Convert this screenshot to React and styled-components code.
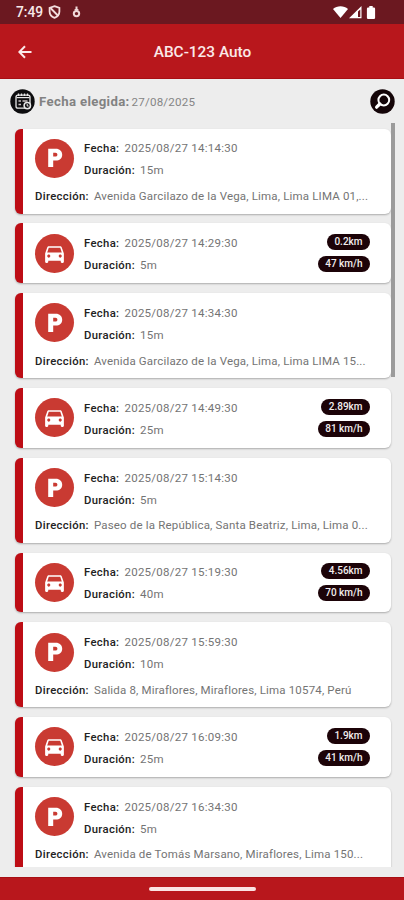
import React from 'react';
import styled, { createGlobalStyle } from 'styled-components';

const TRIPS = [
  {
    type: 'parking',
    date: '2025/08/27 14:14:30',
    duration: '15m',
    address: 'Avenida Garcilazo de la Vega, Lima, Lima LIMA 01,...',
  },
  {
    type: 'drive',
    date: '2025/08/27 14:29:30',
    duration: '5m',
    distance: '0.2km',
    speed: '47 km/h',
  },
  {
    type: 'parking',
    date: '2025/08/27 14:34:30',
    duration: '15m',
    address: 'Avenida Garcilazo de la Vega, Lima, Lima LIMA 15...',
  },
  {
    type: 'drive',
    date: '2025/08/27 14:49:30',
    duration: '25m',
    distance: '2.89km',
    speed: '81 km/h',
  },
  {
    type: 'parking',
    date: '2025/08/27 15:14:30',
    duration: '5m',
    address: 'Paseo de la República, Santa Beatriz, Lima, Lima 0...',
  },
  {
    type: 'drive',
    date: '2025/08/27 15:19:30',
    duration: '40m',
    distance: '4.56km',
    speed: '70 km/h',
  },
  {
    type: 'parking',
    date: '2025/08/27 15:59:30',
    duration: '10m',
    address: 'Salida 8, Miraflores, Miraflores, Lima 10574, Perú',
  },
  {
    type: 'drive',
    date: '2025/08/27 16:09:30',
    duration: '25m',
    distance: '1.9km',
    speed: '41 km/h',
  },
  {
    type: 'parking',
    date: '2025/08/27 16:34:30',
    duration: '5m',
    address: 'Avenida de Tomás Marsano, Miraflores, Lima 150...',
  },
];

const ShieldIcon = () => (
  <svg width="13" height="14" viewBox="0 0 13 14" fill="none">
    <path
      d="M6.5 1.2 L11.4 2.8 V6.5 C11.4 9.6 9.5 11.8 6.5 12.8 C3.5 11.8 1.6 9.6 1.6 6.5 V2.8 Z"
      stroke="#f3dede"
      strokeWidth="1.8"
    />
    <path d="M2.5 3 L10.3 11" stroke="#f3dede" strokeWidth="1.8" />
  </svg>
);

const DebugIcon = () => (
  <svg width="9" height="12" viewBox="0 0 9 12" fill="none">
    <path d="M4.5 0.5 V5" stroke="#f0d8d8" strokeWidth="2" />
    <circle cx="4.5" cy="7.6" r="2.7" stroke="#f0d8d8" strokeWidth="2" />
    <path d="M2.6 3.6 H6.4" stroke="#f0d8d8" strokeWidth="1.2" />
  </svg>
);

const StatusIcons = () => (
  <svg width="43" height="15" viewBox="0 0 43 15" fill="#fff">
    <path d="M0 4 C4 0.3 11 0.3 15 4 L7.5 13 Z" />
    <path fillRule="evenodd" d="M16 13.2 L28.5 1 V13.2 Z M25 6.5 V12 H27.3 V4.5 Z" />
    <path d="M36.3 1 h3.4 v1.6 h1.2 a1.2 1.2 0 0 1 1.2 1.2 v9 a1.2 1.2 0 0 1 -1.2 1.2 h-5.8 a1.2 1.2 0 0 1 -1.2 -1.2 v-9 a1.2 1.2 0 0 1 1.2 -1.2 h1.2 z" />
  </svg>
);

const BackIcon = () => (
  <svg width="14" height="14" viewBox="0 0 14 14" fill="none">
    <path d="M13.5 7 H1.8 M7 1.3 L1.3 7 L7 12.7" stroke="#fbe9e9" strokeWidth="2" />
  </svg>
);

const CalendarIcon = () => (
  <svg width="25" height="25" viewBox="0 0 25 25" fill="none">
    <circle cx="12.5" cy="12.5" r="12.2" fill="#0d0d0f" />
    <rect x="6" y="6.2" width="14" height="13" rx="2" stroke="#e8e8e8" strokeWidth="1.3" />
    <path d="M6.5 8.6 H19.5" stroke="#e8e8e8" strokeWidth="1.2" />
    <path d="M8.5 4.5 V7 M11.5 4.5 V7 M14.5 4.5 V7 M17.5 4.5 V7" stroke="#e8e8e8" strokeWidth="1.3" />
    <path d="M8.5 12 H11 M12.5 12 H17.5 M8.5 15.5 H11" stroke="#c9c2c4" strokeWidth="1.6" />
    <circle cx="17.3" cy="16.6" r="3.2" fill="#0d0d0f" stroke="#e8e8e8" strokeWidth="1.5" />
    <path d="M17.2 15 V17 H18.6" stroke="#e8e8e8" strokeWidth="1" />
  </svg>
);

const SearchIcon = () => (
  <svg width="25" height="25" viewBox="0 0 25 25" fill="none">
    <circle cx="12.5" cy="12.5" r="12.2" fill="#140508" />
    <circle cx="13.8" cy="11" r="5.4" stroke="#fff" strokeWidth="2" />
    <path d="M9.8 15 L6.6 18.2" stroke="#fff" strokeWidth="3.2" strokeLinecap="round" />
  </svg>
);

const ParkingIcon = () => (
  <svg width="24" height="24" viewBox="0 0 24 24" fill="#fff">
    <path
      fillRule="evenodd"
      d="M5.2 2.8 H12.8 C16.6 2.8 19.2 5.2 19.2 8.7 C19.2 12.2 16.6 14.6 12.8 14.6 H10.2 V21 H5.2 Z M10.2 6.8 V10.6 H12.4 C13.7 10.6 14.4 9.8 14.4 8.7 C14.4 7.6 13.7 6.8 12.4 6.8 Z"
    />
  </svg>
);

const CarIcon = () => (
  <svg width="25" height="25" viewBox="0 0 24 24" fill="#fff">
    <path d="M18.92 6.01C18.72 5.42 18.16 5 17.5 5h-11c-.66 0-1.21.42-1.42 1.01L3 12v8c0 .55.45 1 1 1h1c.55 0 1-.45 1-1v-1h12v1c0 .55.45 1 1 1h1c.55 0 1-.45 1-1v-8l-2.08-5.99zM6.5 16c-.83 0-1.5-.67-1.5-1.5S5.67 13 6.5 13s1.5.67 1.5 1.5S7.33 16 6.5 16zm11 0c-.83 0-1.5-.67-1.5-1.5s.67-1.5 1.5-1.5 1.5.67 1.5 1.5-.67 1.5-1.5 1.5zM5 11l1.5-4.5h11L19 11H5z" />
  </svg>
);

const TripCard = ({ trip }) => (
  <Card>
    <Summary>
      <Badge>{trip.type === 'parking' ? <ParkingIcon /> : <CarIcon />}</Badge>
      <Details>
        <Field>
          <Label>Fecha:</Label>
          <Value>{trip.date}</Value>
        </Field>
        <Field>
          <Label>Duración:</Label>
          <Value>{trip.duration}</Value>
        </Field>
      </Details>
      {trip.type === 'drive' && (
        <Stats>
          <Pill>{trip.distance}</Pill>
          <Pill>{trip.speed}</Pill>
        </Stats>
      )}
    </Summary>
    {trip.address && (
      <Address>
        <Label>Dirección:</Label>
        <Value $tight>{trip.address}</Value>
      </Address>
    )}
  </Card>
);

const App = () => {
  return (
    <Screen>
      <GlobalStyle />
      <StatusBar>
        <Clock>7:49</Clock>
        <ShieldIcon />
        <DebugIcon />
        <StatusRight>
          <StatusIcons />
        </StatusRight>
      </StatusBar>
      <AppBar>
        <BackIcon />
        <Title>ABC-123 Auto</Title>
      </AppBar>
      <FilterRow>
        <CalendarIcon />
        <FilterLabel>Fecha elegida:</FilterLabel>
        <FilterDate>27/08/2025</FilterDate>
        <SearchIcon />
      </FilterRow>
      <List>
        {TRIPS.map((trip) => (
          <TripCard key={trip.date} trip={trip} />
        ))}
        <ScrollThumb />
      </List>
      <NavBar>
        <Handle />
      </NavBar>
    </Screen>
  );
};

export default App;

const GlobalStyle = createGlobalStyle`
  * {
    box-sizing: border-box;
  }
  body {
    margin: 0;
    background: #ededed;
    font-family: Roboto, sans-serif;
  }
  svg {
    display: block;
    flex-shrink: 0;
  }
`;

const Screen = styled.div`
  width: 404px;
  height: 900px;
  display: flex;
  flex-direction: column;
  background: #ededed;
  overflow: hidden;
`;

const StatusBar = styled.div`
  height: 24px;
  flex-shrink: 0;
  display: flex;
  align-items: center;
  padding: 0 28px 0 16px;
  background: #6b1820;
`;

const Clock = styled.span`
  width: 32px;
  font-size: 13.8px;
  font-weight: 500;
  line-height: 24px;
  color: #f7e8e8;
  & + svg + svg {
    margin-left: 10.5px;
  }
`;

const StatusRight = styled.div`
  margin-left: auto;
`;

const AppBar = styled.header`
  height: 55px;
  flex-shrink: 0;
  display: grid;
  grid-template-columns: 14px 1fr 14px;
  align-items: center;
  padding: 1px 17px 0 18px;
  background: #b8171c;
  border-bottom: 1px solid #a80f14;
`;

const Title = styled.h1`
  margin: 0;
  text-align: center;
  font-size: 15.4px;
  font-weight: 500;
  color: #fbe9e9;
`;

const FilterRow = styled.div`
  height: 44px;
  flex-shrink: 0;
  display: flex;
  align-items: center;
  padding: 1px 9px 0 10px;
  & > svg:last-child {
    margin-left: auto;
  }
`;

const FilterLabel = styled.span`
  margin-left: 4px;
  width: 92.5px;
  font-size: 13.2px;
  font-weight: 700;
  letter-spacing: 0.35px;
  white-space: nowrap;
  color: #828282;
`;

const FilterDate = styled.span`
  font-size: 11.6px;
  letter-spacing: 0.2px;
  color: #858585;
`;

const List = styled.main`
  position: relative;
  height: 744px;
  flex-shrink: 0;
  display: flex;
  flex-direction: column;
  gap: 9.8px;
  padding: 5.6px 13.5px 0 15px;
  overflow: hidden;
`;

const ScrollThumb = styled.div`
  position: absolute;
  top: 0;
  right: 9.5px;
  width: 3.5px;
  height: 254px;
  background: #9b9b9b;
`;

const Card = styled.article`
  flex-shrink: 0;
  padding: 10px 20.5px 10.2px 12px;
  border-left: 8px solid #bd0d15;
  border-radius: 6px;
  background: #fff;
  box-shadow: 0 1px 2px rgba(0, 0, 0, 0.28);
`;

const Summary = styled.div`
  height: 39.7px;
  display: flex;
  align-items: center;
`;

const Badge = styled.div`
  width: 39px;
  height: 39px;
  flex-shrink: 0;
  display: flex;
  align-items: center;
  justify-content: center;
  border-radius: 50%;
  background: #c93a32;
`;

const Details = styled.div`
  margin-left: 10px;
  padding-top: 2px;
  display: flex;
  flex-direction: column;
  gap: 6px;
`;

const Field = styled.div`
  display: flex;
  align-items: baseline;
  gap: 5px;
  height: 16px;
  line-height: 16px;
`;

const Label = styled.span`
  font-size: 11.3px;
  font-weight: 500;
  letter-spacing: 0.34px;
  white-space: nowrap;
  color: #222;
`;

const Value = styled.span`
  font-size: 11.5px;
  letter-spacing: ${({ $tight }) => ($tight ? '0.17px' : '0.25px')};
  white-space: nowrap;
  color: #747474;
`;

const Address = styled.div`
  display: flex;
  align-items: baseline;
  gap: 5px;
  height: 16px;
  margin-top: 10px;
  margin-bottom: -0.8px;
  line-height: 16px;
`;

const Stats = styled.div`
  margin-left: auto;
  display: flex;
  flex-direction: column;
  align-items: flex-end;
  gap: 6px;
`;

const Pill = styled.span`
  height: 16px;
  padding: 0 7.5px;
  border-radius: 8px;
  font-size: 10px;
  font-weight: 500;
  line-height: 16px;
  color: #f2eded;
  background: #1c0308;
`;

const NavBar = styled.footer`
  margin-top: auto;
  height: 23px;
  flex-shrink: 0;
  display: flex;
  align-items: center;
  justify-content: center;
  background: #b8171c;
  border-top: 1px solid #a80f14;
`;

const Handle = styled.div`
  width: 107px;
  height: 4px;
  border-radius: 2px;
  background: #fbe3e3;
`;
